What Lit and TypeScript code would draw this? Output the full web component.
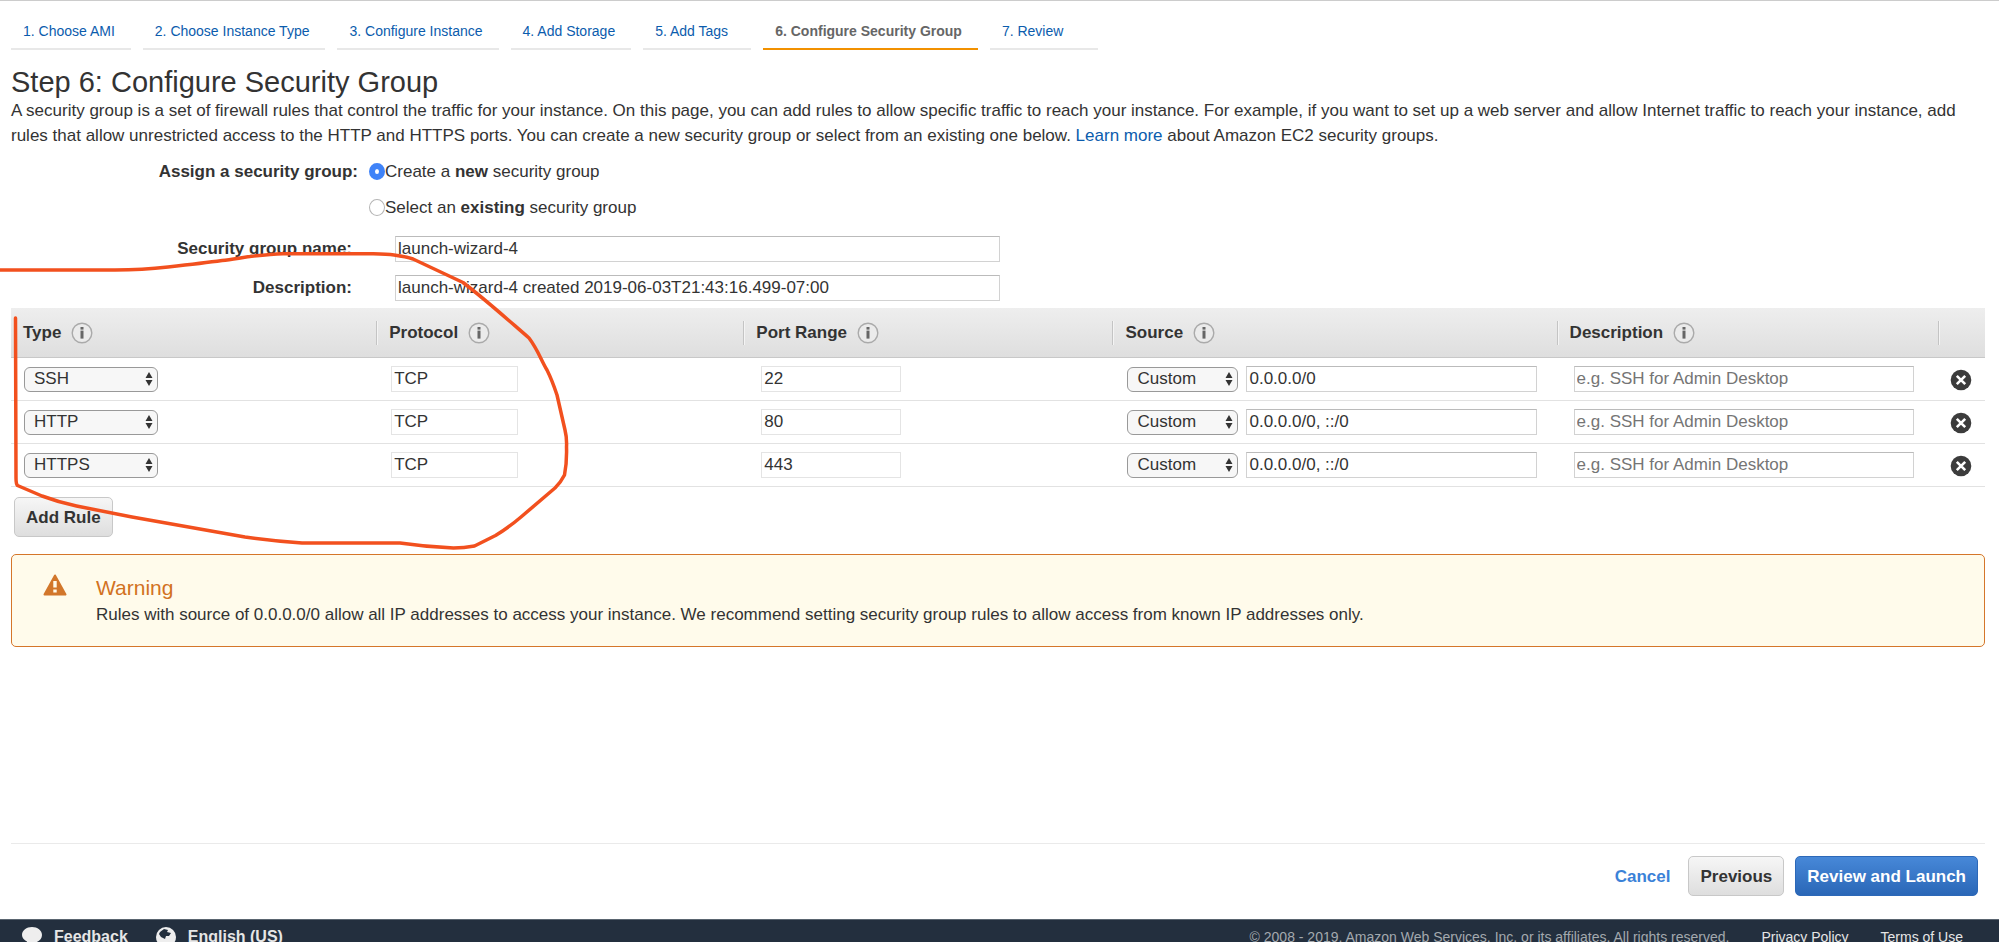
import { LitElement, html, svg, css } from "lit";
import { customElement } from "lit/decorators.js";

interface Rule {
  type: string;
  port: string;
  source: string;
}

const STEPS = [
  "1. Choose AMI",
  "2. Choose Instance Type",
  "3. Configure Instance",
  "4. Add Storage",
  "5. Add Tags",
  "6. Configure Security Group",
  "7. Review",
];

const RULES: Rule[] = [
  { type: "SSH", port: "22", source: "0.0.0.0/0" },
  { type: "HTTP", port: "80", source: "0.0.0.0/0, ::/0" },
  { type: "HTTPS", port: "443", source: "0.0.0.0/0, ::/0" },
];

const infoIcon = html`<svg class="info" viewBox="0 0 22 22" aria-hidden="true">
  <circle cx="11" cy="11" r="9.8" fill="#ebebeb" stroke="#aaa" stroke-width="1.4" />
  <rect x="9.500" y="5" width="3" height="2.600" fill="#666" />
  <rect x="9.500" y="8.600" width="3" height="8" fill="#666" />
</svg>`;

// Freehand pen mark circling the rule types and protocols.
const penMark = svg`<path
  d="M0 270H115C134 270 151 269 168 267C186 265 204 263 222 260.500C242 258 262 254 283 253.700H367C377 254 386 254 394 255C401 256 407 257 413 259L463 282.500C486 300 507 319 529 338C538 350 541 360 547 370C551 378 554 386 557 395L565 430Q567 438 566.500 447Q567 462 564.500 475Q561 482 555 488L521 517Q508 528 495.500 535.500L474.500 546Q464 548 453.500 548Q427 547 400 543H302Q273 541 245 537L132 517L76.500 506Q58 502 42 496L17.500 485.500Q16 484 16 478L15.500 318"
  fill="none" stroke="#f2501e" stroke-width="3.500" stroke-linecap="round" stroke-linejoin="round" />`;

@customElement("app-root")
export class AppRoot extends LitElement {
  static styles = css`
    :host {
      display: flex;
      flex-direction: column;
      position: relative;
      box-sizing: border-box;
      height: 100vh;
      overflow: hidden;
      border-top: 1px solid #ccc;
      background: #fff;
      color: #333;
      font: 17px/25px "Liberation Sans", Arial, sans-serif;
    }
    * {
      box-sizing: border-box;
    }
    a {
      color: #0b5cad;
      text-decoration: none;
    }
    input,
    select,
    button {
      font: inherit;
      color: inherit;
      margin: 0;
    }
    .page {
      flex: 1;
      display: flex;
      flex-direction: column;
      padding: 14px 14px 0 11px;
    }
    .steps {
      display: flex;
      gap: 12px;
      font-size: 14px;
      line-height: 32px;
    }
    .step {
      min-width: 108px;
      height: 35px;
      padding: 0 16px 0 12px;
      border-bottom: 2px solid #e8e8e8;
      white-space: nowrap;
    }
    .step.current {
      border-color: #f29100;
      color: #666;
      font-weight: bold;
    }
    h1 {
      margin: 16px 0 0;
      font-size: 29px;
      line-height: 32px;
      font-weight: normal;
    }
    .intro {
      margin: 0;
    }
    .form {
      display: grid;
      grid-template-columns: 341px minmax(0, 605px);
      column-gap: 43px;
      row-gap: 13px;
      margin-bottom: 7px;
    }
    .assign {
      display: flex;
      gap: 11px;
      margin: 11px 0 16px;
      padding: 0;
      border: 0;
    }
    .assign-title {
      width: 347px;
      text-align: right;
      font-weight: bold;
    }
    .radios {
      display: flex;
      flex-direction: column;
      gap: 11px;
    }
    .radio {
      display: flex;
      align-items: center;
    }
    .radio label {
      white-space: pre;
    }
    .radio input {
      appearance: none;
      width: 16px;
      height: 17px;
      border: 1px solid #b5b5b5;
      border-radius: 50%;
      background: #fff;
    }
    .radio input:checked {
      border: 6px solid #3f83f8;
    }
    .field-label {
      text-align: right;
      font-weight: bold;
    }
    .text {
      width: 100%;
      height: 26px;
      padding: 0 2px;
      border: 1px solid #d2d2d2;
      border-top-color: #bbb;
      border-radius: 0;
      background: #fff;
    }
    .text::placeholder {
      color: #757575;
      opacity: 1;
    }
    .text.fixed {
      border-color: #e4e4e4;
    }
    .protocol {
      width: 127px;
    }
    .port {
      width: 140px;
    }
    .rules {
      width: 100%;
      table-layout: fixed;
      border-collapse: separate;
      border-spacing: 0;
    }
    .c-type { width: 18.5%; }
    .c-protocol { width: 18.6%; }
    .c-port { width: 18.7%; }
    .c-source { width: 22.5%; }
    .c-desc { width: 19.3%; }
    .c-remove { width: 2.4%; }
    thead {
      background: linear-gradient(#eee, #dedede);
    }
    th {
      height: 50px;
      padding: 0;
      border-bottom: 1px solid #c8c8c8;
      text-align: left;
    }
    .head {
      display: flex;
      align-items: center;
      gap: 10px;
      height: 24px;
      padding-left: 12px;
    }
    th + th .head {
      border-left: 1px solid #c4c4c4;
      box-shadow: inset 1px 0 #f4f4f4;
    }
    .info {
      flex: none;
      width: 22px;
      height: 22px;
    }
    td {
      height: 43px;
      padding: 0 0 0 15px;
      border-bottom: 1px solid #e2e2e2;
    }
    td:first-child {
      padding-left: 13px;
    }
    .c3 {
      padding-left: 18px;
    }
    .c4 {
      padding-right: 20px;
    }
    .c5 {
      padding-left: 17px;
      padding-right: 24px;
    }
    .source {
      display: flex;
      align-items: center;
      gap: 8px;
    }
    .source .text {
      flex: 1;
      min-width: 0;
    }
    .pick {
      display: grid;
      align-items: center;
      width: 134px;
    }
    .source .pick {
      width: 111px;
    }
    .pick select {
      grid-area: 1 / 1;
      appearance: none;
      width: 100%;
      height: 25px;
      padding: 0 9px;
      border: 1px solid #999;
      border-radius: 6px;
      background: #f7f7f7;
      line-height: 22px;
    }
    .arrows {
      grid-area: 1 / 1;
      justify-self: end;
      width: 8px;
      height: 16px;
      margin-right: 5px;
      pointer-events: none;
    }
    .remove {
      display: block;
      width: 22px;
      height: 22px;
      margin-left: 4px;
      padding: 0;
      border: 0;
      background: none;
    }
    .c6 {
      padding: 2px 0 0 8px;
    }
    .btn {
      height: 40px;
      padding: 0 11px;
      border: 1px solid #c8c8c8;
      border-radius: 5px;
      background: linear-gradient(#f6f6f6, #dedede);
      font-weight: bold;
      white-space: nowrap;
    }
    .btn.primary {
      border-color: #2c68b8;
      background: linear-gradient(#4788d8, #2a67b7);
      color: #fff;
    }
    .add {
      align-self: flex-start;
      margin: 10px 0 17px 3px;
    }
    .warning {
      display: flex;
      min-height: 93px;
      padding: 19px 31px;
      border: 1px solid #d5762a;
      border-radius: 5px;
      background: #fffbeb;
    }
    .warn-icon {
      flex: none;
      width: 24px;
      height: 22px;
      margin-right: 29px;
    }
    h2 {
      margin: 0;
      color: #d2721f;
      font-size: 21px;
      line-height: 28px;
      font-weight: normal;
    }
    .warning p {
      margin: 0;
    }
    .actions {
      display: flex;
      align-items: center;
      justify-content: flex-end;
      gap: 11px;
      margin-top: auto;
      padding: 12px 7px 23px 0;
      border-top: 1px solid #eaeaea;
    }
    .cancel {
      margin-right: 7px;
      color: #3a82d8;
      font-weight: bold;
    }
    footer {
      display: flex;
      flex: none;
      gap: 32px;
      height: 23px;
      padding: 5px 36px 0 22px;
      overflow: hidden;
      border-top: 1px solid #5a6570;
      background: #232f3e;
      color: #a3a9ae;
      font-size: 14px;
      line-height: 24px;
      white-space: nowrap;
    }
    footer a {
      color: #e6e6e6;
    }
    .foot-link {
      display: flex;
      align-items: flex-start;
      gap: 12px;
      font-size: 16px;
      font-weight: bold;
    }
    .foot-link + .foot-link {
      margin-left: -4px;
    }
    .foot-icon {
      width: 20px;
      height: 20px;
      margin-top: 1px;
    }
    .copyright {
      margin-left: auto;
    }
    .pen {
      position: absolute;
      top: -1px;
      left: 0;
      width: 600px;
      height: 560px;
      pointer-events: none;
    }
  `;

  private pick(value: string, label: string) {
    return html`<span class="pick">
      <select aria-label=${label}>
        <option>${value}</option>
      </select>
      <svg class="arrows" viewBox="0 0 8 16" aria-hidden="true">
        <path d="M4 1L7.500 7H0.500ZM4 15L0.500 9H7.500Z" fill="#333" />
      </svg>
    </span>`;
  }

  private head(title: string) {
    return html`<th scope="col"><div class="head">${title} ${infoIcon}</div></th>`;
  }

  private row(rule: Rule) {
    return html`<tr>
      <td>${this.pick(rule.type, "Type")}</td>
      <td><input class="text fixed protocol" aria-label="Protocol" readonly value="TCP" /></td>
      <td class="c3"><input class="text fixed port" aria-label="Port Range" readonly .value=${rule.port} /></td>
      <td class="c4">
        <div class="source">
          ${this.pick("Custom", "Source")}
          <input class="text" aria-label="Source address" .value=${rule.source} />
        </div>
      </td>
      <td class="c5"><input class="text" aria-label="Description" placeholder="e.g. SSH for Admin Desktop" /></td>
      <td class="c6">
        <button class="remove" aria-label="Remove rule">
          <svg width="22" height="22" viewBox="0 0 22 22" aria-hidden="true">
            <circle cx="11" cy="11" r="10.300" fill="#3c3c3c" />
            <path d="M6.800 6.800L15.200 15.200M15.200 6.800L6.800 15.200" stroke="#fff" stroke-width="2.600" />
          </svg>
        </button>
      </td>
    </tr>`;
  }

  render() {
    return html`
      <main class="page">
        <nav class="steps" aria-label="Launch steps">
          ${STEPS.map((s, i) =>
            i === 5
              ? html`<span class="step current" aria-current="step">${s}</span>`
              : html`<a class="step" href="#">${s}</a>`
          )}
        </nav>
        <h1>Step 6: Configure Security Group</h1>
        <p class="intro">
          A security group is a set of firewall rules that control the traffic for your instance. On this page, you can
          add rules to allow specific traffic to reach your instance. For example, if you want to set up a web server
          and allow Internet traffic to reach your instance, add rules that allow unrestricted access to the HTTP and
          HTTPS ports. You can create a new security group or select from an existing one below.
          <a href="#">Learn more</a> about Amazon EC2 security groups.
        </p>
        <div class="assign" role="radiogroup" aria-labelledby="assign">
          <span class="assign-title" id="assign">Assign a security group:</span>
          <div class="radios">
            <div class="radio">
              <input type="radio" name="sg" id="sg-new" checked /><label for="sg-new">Create a <b>new</b> security group</label>
            </div>
            <div class="radio">
              <input type="radio" name="sg" id="sg-old" /><label for="sg-old">Select an <b>existing</b> security group</label>
            </div>
          </div>
        </div>
        <div class="form">
          <label class="field-label" for="name">Security group name:</label>
          <input class="text" id="name" value="launch-wizard-4" />
          <label class="field-label" for="desc">Description:</label>
          <input class="text" id="desc" value="launch-wizard-4 created 2019-06-03T21:43:16.499-07:00" />
        </div>
        <table class="rules">
          <colgroup>
            <col class="c-type" /><col class="c-protocol" /><col class="c-port" />
            <col class="c-source" /><col class="c-desc" /><col class="c-remove" />
          </colgroup>
          <thead>
            <tr>
              ${["Type", "Protocol", "Port Range", "Source", "Description"].map((t) => this.head(t))}
              <th><div class="head"></div></th>
            </tr>
          </thead>
          <tbody>
            ${RULES.map((r) => this.row(r))}
          </tbody>
        </table>
        <button class="btn add">Add Rule</button>
        <section class="warning">
          <svg class="warn-icon" viewBox="0 0 24 22" aria-hidden="true">
            <path d="M12 1.500L22.500 20.500H1.500Z" fill="#d2772b" stroke="#d2772b" stroke-width="2" stroke-linejoin="round" />
            <path d="M10.300 7H13.700V13.500H10.300ZM10.300 15.500H13.700V18.500H10.300Z" fill="#fffbeb" />
          </svg>
          <div>
            <h2>Warning</h2>
            <p>
              Rules with source of 0.0.0.0/0 allow all IP addresses to access your instance. We recommend setting
              security group rules to allow access from known IP addresses only.
            </p>
          </div>
        </section>
        <div class="actions">
          <a class="cancel" href="#">Cancel</a>
          <button class="btn">Previous</button>
          <button class="btn primary">Review and Launch</button>
        </div>
      </main>
      <footer>
        <a class="foot-link" href="#">
          <svg class="foot-icon" viewBox="0 0 20 20" aria-hidden="true">
            <path d="M10 1C15.500 1 20 4.500 20 9S15.500 17 10 17L4 20L5 15.600C2 14.200 0 11.800 0 9C0 4.500 4.500 1 10 1Z" fill="#eee" />
          </svg>
          Feedback
        </a>
        <a class="foot-link" href="#">
          <svg class="foot-icon" viewBox="0 0 20 20" aria-hidden="true">
            <circle cx="10" cy="11" r="10" fill="#eee" />
            <path d="M4 6L8 3L12 4L11 6L15 7L13 10L10 10L9 13L5 11L3 8Z" fill="#232f3e" />
          </svg>
          English (US)
        </a>
        <span class="copyright">© 2008 - 2019, Amazon Web Services, Inc. or its affiliates. All rights reserved.</span>
        <a href="#">Privacy Policy</a>
        <a href="#">Terms of Use</a>
      </footer>
      <svg class="pen" viewBox="0 0 600 560" aria-hidden="true">${penMark}</svg>
    `;
  }
}
